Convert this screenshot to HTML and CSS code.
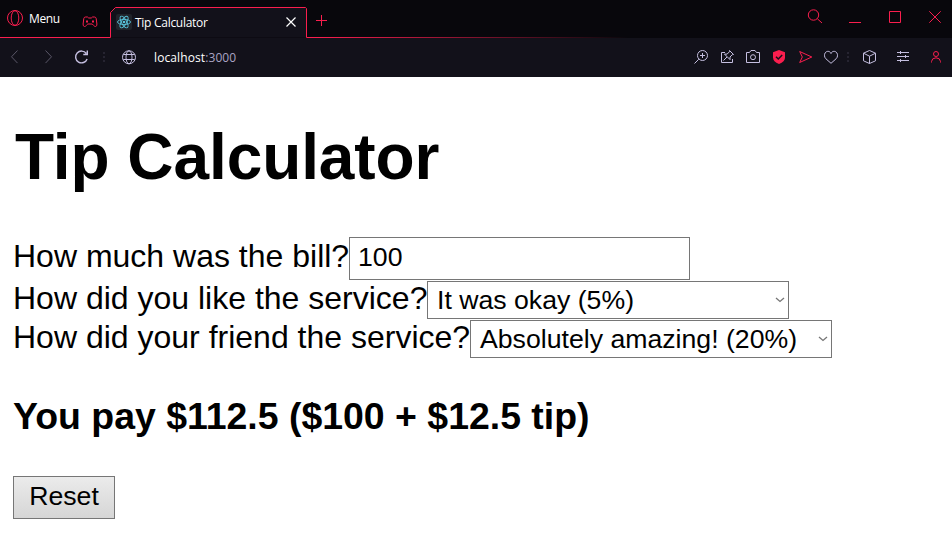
FILE: index.html
```html
<!DOCTYPE html>
<html lang="en">
<head>
<meta charset="utf-8">
<title>Tip Calculator</title>
<link rel="stylesheet" href="styles.css">
</head>
<body>
<header class="browser">
  <div class="tabbar">
    <div class="menu">
      <svg class="red" width="29" height="37" viewBox="0 0 29 37"><circle cx="15" cy="18" r="7.5"/><ellipse cx="15" cy="18" rx="3.8" ry="7.3"/></svg>
      <span class="menu-label">Menu</span>
      <svg class="red pad" width="20" height="37" viewBox="80 0 20 37"><path d="M85.500 17h2l1.200 1h2.600l1.200-1h2q1.300 0 1.700 1.500l.7 5.500q.2 2.300-1.400 2.500-1 0-2-1.200l-1.300-1.300h-4.400l-1.300 1.300q-1 1.200-2 1.200-1.600-.2-1.400-2.500l.7-5.500q.4-1.500 1.700-1.500z"/><path d="M86 21.500h2M92 21.500h2" stroke-width="1.800"/></svg>
    </div>
    <div class="tab">
      <svg class="outline red" width="198" height="38" viewBox="110 0 198 38"><path d="M109 37.500H110.500V12.500L115.500 7.500H305.500L306.500 8.500V37.500H308" fill="#12111a"/></svg>
      <svg class="favicon" width="16" height="16" viewBox="0 0 16 16"><rect width="16" height="16" rx="2" fill="#20232a"/><g fill="none" stroke="#58c4dc" stroke-width=".9"><ellipse cx="8" cy="8" rx="6.500" ry="2.600"/><ellipse cx="8" cy="8" rx="6.500" ry="2.600" transform="rotate(60 8 8)"/><ellipse cx="8" cy="8" rx="6.500" ry="2.600" transform="rotate(120 8 8)"/></g><circle cx="8" cy="8" r="1.300" fill="#58c4dc"/></svg>
      <span class="tab-title">Tip Calculator</span>
      <svg class="tab-close" width="12" height="12" viewBox="0 0 12 12"><path d="M1.500 1.500l9 9M10.500 1.500l-9 9"/></svg>
    </div>
    <div class="tab-rest">
      <svg class="red" width="28" height="37" viewBox="308 0 28 37"><path d="M316 20.500h11M321.500 15v11"/></svg>
      <div class="window-buttons">
        <svg class="red" width="40" height="37" viewBox="795 0 40 37"><circle cx="813.500" cy="15" r="5.200"/><path d="M817.300 18.700l4.700 4.300"/></svg>
        <svg class="red" width="40" height="37" viewBox="835 0 40 37"><path d="M849 22.500h12"/></svg>
        <svg class="red" width="40" height="37" viewBox="875 0 40 37"><path d="M889.500 11.500h11v11h-11z"/></svg>
        <svg class="red" width="37" height="37" viewBox="915 0 37 37"><path d="M929.300 11.300l11.400 11.400M940.700 11.300l-11.400 11.400"/></svg>
      </div>
    </div>
  </div>
  <div class="toolbar">
    <svg class="dim" width="30" height="39" viewBox="0 38 30 39"><path d="M17.500 50.500l-6 6.300 6 6.300"/></svg>
    <svg class="dim" width="36" height="39" viewBox="30 38 36 39"><path d="M45.500 50.500l6 6.300-6 6.300"/></svg>
    <svg class="reload" width="32" height="39" viewBox="66 38 32 39"><path d="M86.300 53.500a5.900 5.900 0 1 0 .8 5.400M87.300 50.500v4h-4"/></svg>
    <svg class="dots" width="12" height="39" viewBox="98 38 12 39"><path d="M103 52h2v2h-2zM103 56h2v2h-2zM103 60h2v2h-2z"/></svg>
    <svg class="icon" width="38" height="39" viewBox="110 38 38 39"><circle cx="129" cy="57.300" r="6.500"/><ellipse cx="129" cy="57.300" rx="3" ry="6.500"/><path d="M123.300 54.500h11.400M123.300 59.500h11.400"/></svg>
    <span class="address">localhost<span class="port">:3000</span></span>
    <div class="actions">
      <svg class="icon" width="26" height="39" viewBox="688 38 26 39"><circle cx="702.500" cy="55.500" r="5"/><path d="M700 55.500h5M702.500 53v5M698.800 59.200l-4.300 4.300"/></svg>
      <svg class="icon" width="26" height="39" viewBox="714 38 26 39"><path d="M725 52.500h-3.500v10h11v-3.500M729.500 50.500l4 4-1.200.2-2.300 2.300v2.600l-5.500-5.500h2.600l2.300-2.300zM727 57l-3.500 3.500"/></svg>
      <svg class="icon" width="26" height="39" viewBox="740 38 26 39"><path d="M746.500 52.500h3l1.500-2h4l1.500 2h3v10h-13z"/><circle cx="753" cy="57.200" r="2.500"/></svg>
      <svg class="shield" width="26" height="39" viewBox="766 38 26 39"><path d="M779 50l6 2.200v5.300q0 4-6 6.500-6-2.500-6-6.500v-5.300z" fill="#fa1e4e"/><path d="M776 56.700l2.300 2.300 3.900-4" fill="none" stroke="#12111a" stroke-width="1.500"/></svg>
      <svg class="red" width="26" height="39" viewBox="792 38 26 39"><path d="M799.700 51.500l12.100 5.500-12.100 5.500 2.600-5.500z"/></svg>
      <svg class="icon" width="26" height="39" viewBox="818 38 26 39"><path d="M831 63.300l-5.200-4.600c-1.600-1.600-1.600-4.200-.7-5.700 1.500-2.400 4.800-2.200 5.900.5 1.100-2.700 4.400-2.900 5.900-.5.9 1.500.9 4.100-.7 5.700z"/></svg>
      <svg class="dots" width="8" height="39" viewBox="844 38 8 39"><path d="M847 52h2v2h-2zM847 56h2v2h-2zM847 60h2v2h-2z"/></svg>
      <svg class="icon" width="34" height="39" viewBox="852 38 34 39"><path d="M869.500 50.500l6 2.700v7.600l-6 2.700-6-2.700v-7.600zM863.500 53.200l6 3 6-3M869.500 56.200v7.300"/></svg>
      <svg class="icon" width="34" height="39" viewBox="886 38 34 39"><path d="M897 52.500h12M897 56.500h12M897 60.500h12M900.500 51v3M905.500 55v3M900.500 59v3"/></svg>
      <svg class="red" width="32" height="39" viewBox="920 38 32 39"><circle cx="936" cy="54" r="2.500"/><path d="M931.500 62.500v-1q.3-3.500 4.500-3.700 4.200.2 4.500 3.700v1"/></svg>
    </div>
  </div>
</header>
<main class="page">
  <h1 class="title">Tip Calculator</h1>
  <div class="row row-bill"><label class="q-bill" for="bill">How much was the bill?</label><input class="field" id="bill" type="text" value="100"></div>
  <div class="row"><span class="q-me">How did you like the service?</span><div class="select"><span>It was okay (5%)</span><svg class="caret" width="10" height="6" viewBox="0 0 10 6"><path d="M1 1l4 3.500 4-3.500"/></svg></div></div>
  <div class="row"><span class="q-friend">How did your friend the service?</span><div class="select"><span>Absolutely amazing! (20%)</span><svg class="caret" width="10" height="6" viewBox="0 0 10 6"><path d="M1 1l4 3.500 4-3.500"/></svg></div></div>
  <h3 class="total">You pay $112.5 ($100 + $12.5 tip)</h3>
  <button class="reset">Reset</button>
</main>
</body>
</html>
```
FILE: styles.css
```css
* { box-sizing: border-box; }
body { margin: 0; height: 558px; overflow: hidden; background: #fff; color: #000; font-family: "Liberation Sans", Arial, sans-serif; }
svg { display: block; flex: none; }

.browser { height: 77px; background: #12111a; color: #fff; font-family: "Open Sans", "Noto Sans", sans-serif; font-size: 12px; line-height: 16px; }
.tabbar { display: flex; height: 38px; background: #08070c; }
.menu { display: flex; width: 110px; border-bottom: 1px solid #fa1e4e; }
.menu-label { width: 51px; padding-top: 11px; letter-spacing: -.4px; }
.tab { position: relative; display: flex; width: 198px; padding-left: 6px; }
.outline { position: absolute; left: 0; top: 0; }
.favicon { position: relative; margin-top: 14px; }
.tab-title { position: relative; width: 151px; padding: 15px 0 0 3px; white-space: nowrap; letter-spacing: -.28px; }
.tab-close { position: relative; margin-top: 16px; fill: none; stroke: #fff; stroke-width: 1.2; margin-left: 2px; }
.tab-rest { display: flex; flex: 1; justify-content: space-between; background: linear-gradient(90deg, #fa1e4e 10px, transparent 320px) 0 37px / 100% 1px no-repeat; }
.window-buttons { display: flex; }

.toolbar { display: flex; height: 39px; }
.address { padding: 12px 0 0 6px; white-space: nowrap; letter-spacing: .1px; }
.port { color: #aaa4c4; }
.actions { display: flex; margin-left: auto; }

.red { fill: none; stroke: #fa1e4e; stroke-width: 1; }
.icon { fill: none; stroke: #c5bfe0; stroke-width: 1; }
.reload { fill: none; stroke: #c5bfe0; stroke-width: 1.4; }
.dim { fill: none; stroke: #5a5768; stroke-width: 1; }
.dots { fill: #262431; }

.page { padding: 43px 13px 0; }
.title { margin: 0 0 43px 2px; font-size: 64px; line-height: 74px; white-space: nowrap; letter-spacing: -.08px; }
.row { display: flex; height: 39px; font-size: 32px; line-height: 34px; white-space: nowrap; }
.row-bill { height: 44px; }
.q-bill { width: 336px; padding-top: 2px; }
.q-me { width: 414px; }
.q-friend { width: 457px; }
.field { width: 341px; height: 43px; padding: 0 8px 2px; border: 1px solid #767676; font: 26.67px/39px "Liberation Sans", Arial, sans-serif; color: #000; }
.select { display: flex; align-items: center; justify-content: space-between; width: 362px; height: 38px; padding: 0 3px 0 9px; border: 1px solid #767676; font-size: 26.67px; line-height: 36px; }
.caret { fill: none; stroke: #767676; stroke-width: 1.3; }
.total { margin: 36px 0 38px; font-size: 37.44px; line-height: 43px; white-space: nowrap; }
.reset { display: block; width: 102px; height: 43px; padding: 0 0 2px; border: 1px solid #767676; border-radius: 0; background: linear-gradient(#ebebeb, #d6d6d6); color: #000; font: 26.67px/39px "Liberation Sans", Arial, sans-serif; }
```
